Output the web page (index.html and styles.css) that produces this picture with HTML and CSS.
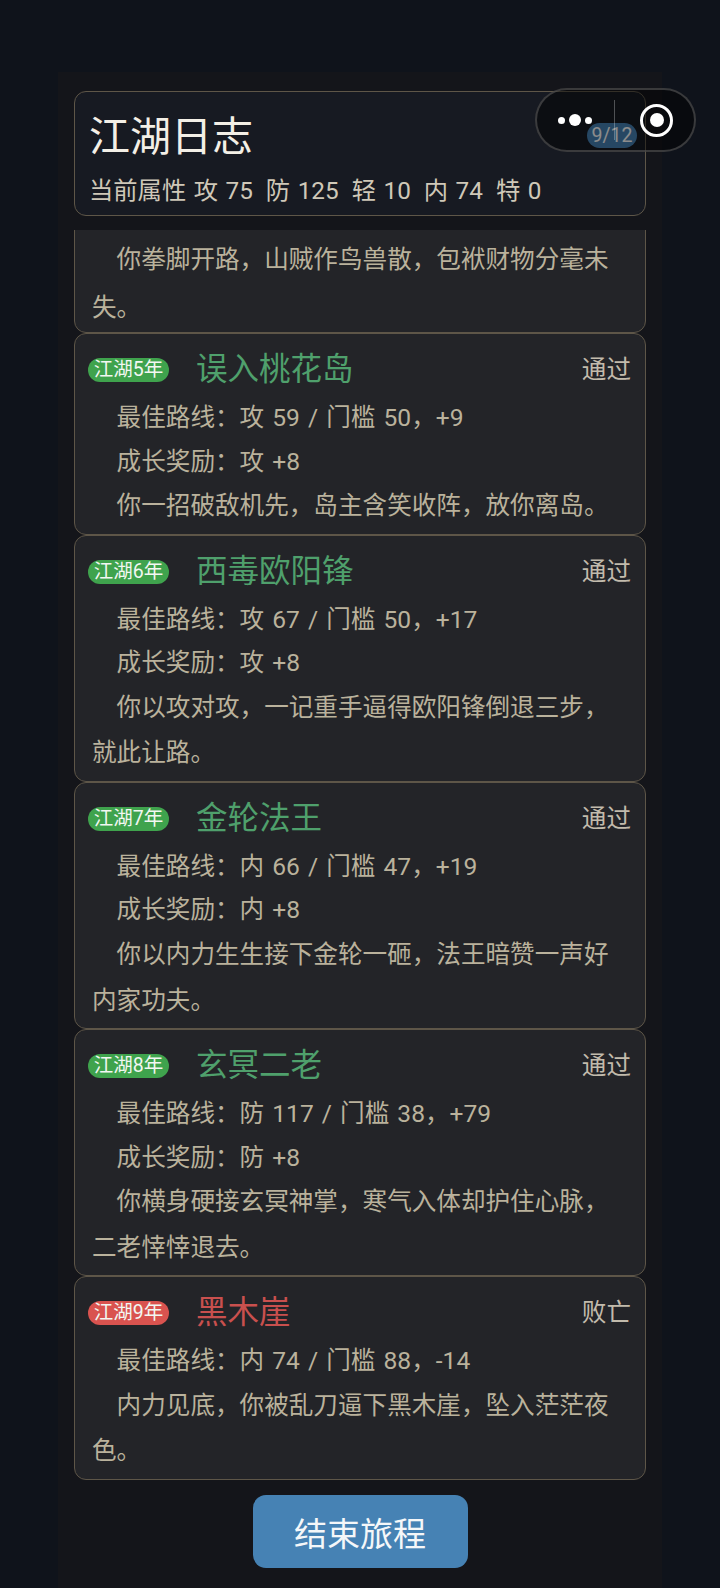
FILE: index.html
```html
<!DOCTYPE html>
<html lang="zh-CN">
<head>
<meta charset="utf-8">
<title>江湖日志</title>
<link rel="stylesheet" href="styles.css">
</head>
<body>
<main class="panel">
  <header class="head">
    <h1 class="head-title">江湖日志</h1>
    <div class="attrs"><span>当前属性 攻 75</span><span>防 125</span><span>轻 10</span><span>内 74</span><span>特 0</span></div>
    <div class="progress">9/12</div>
  </header>
  <section class="log">
    <article class="card card-cut">
      <p class="line desc desc-cut">你拳脚开路，山贼作鸟兽散，包袱财物分毫未失。</p>
    </article>
    <article class="card">
      <div class="row"><span class="tag">江湖5年</span><span class="name">误入桃花岛</span><span class="status">通过</span></div>
      <p class="line">最佳路线：攻 59 / 门槛 50，+9</p>
      <p class="line">成长奖励：攻 +8</p>
      <p class="line desc">你一招破敌机先，岛主含笑收阵，放你离岛。</p>
    </article>
    <article class="card">
      <div class="row"><span class="tag">江湖6年</span><span class="name">西毒欧阳锋</span><span class="status">通过</span></div>
      <p class="line">最佳路线：攻 67 / 门槛 50，+17</p>
      <p class="line">成长奖励：攻 +8</p>
      <p class="line desc">你以攻对攻，一记重手逼得欧阳锋倒退三步，就此让路。</p>
    </article>
    <article class="card">
      <div class="row"><span class="tag">江湖7年</span><span class="name">金轮法王</span><span class="status">通过</span></div>
      <p class="line">最佳路线：内 66 / 门槛 47，+19</p>
      <p class="line">成长奖励：内 +8</p>
      <p class="line desc">你以内力生生接下金轮一砸，法王暗赞一声好内家功夫。</p>
    </article>
    <article class="card">
      <div class="row"><span class="tag">江湖8年</span><span class="name">玄冥二老</span><span class="status">通过</span></div>
      <p class="line">最佳路线：防 117 / 门槛 38，+79</p>
      <p class="line">成长奖励：防 +8</p>
      <p class="line desc">你横身硬接玄冥神掌，寒气入体却护住心脉，二老悻悻退去。</p>
    </article>
    <article class="card">
      <div class="row"><span class="tag tag-fail">江湖9年</span><span class="name name-fail">黑木崖</span><span class="status">败亡</span></div>
      <p class="line">最佳路线：内 74 / 门槛 88，-14</p>
      <p class="line desc">内力见底，你被乱刀逼下黑木崖，坠入茫茫夜色。</p>
    </article>
  </section>
  <div class="actions"><button class="finish" type="button">结束旅程</button></div>
</main>
<div class="capsule" aria-hidden="true">
  <div class="dots"><i class="dot"></i><i class="dot dot-big"></i><i class="dot"></i></div>
  <i class="divider"></i>
  <div class="target"><i class="target-core"></i></div>
</div>
</body>
</html>
```
FILE: styles.css
```css
* { box-sizing: border-box; }
html, body { margin: 0; height: 100%; }
body {
  background: #0f131b;
  font-family: Roboto, "Noto Sans CJK SC", sans-serif;
  overflow: hidden;
  padding: 72px 58px 0;
}
.panel {
  position: relative;
  height: 1516px;
  background: #14151a;
  padding: 19px 16px 0;
  display: flex;
  flex-direction: column;
}
.head {
  position: relative;
  flex: none;
  height: 125px;
  background: #171a22;
  border: 1px solid #5e5648;
  border-radius: 12px;
  padding: 15px 14px 0;
}
.head-title {
  margin: 0;
  font-size: 41px;
  line-height: 60px;
  font-weight: 400;
  color: #f3efe6;
}
.attrs {
  margin-top: 6px;
  display: flex;
  gap: 13px;
  font-size: 24.3px;
  line-height: 36px;
  word-spacing: 1.5px;
  color: #cfc8b8;
}
.progress {
  position: absolute;
  right: 8px;
  top: 31px;
  width: 50px;
  height: 25px;
  border-radius: 13px;
  background: #4682b4;
  color: #fff;
  font-size: 19.5px;
  line-height: 25px;
  text-align: center;
}
.log {
  flex: none;
  height: 1250px;
  margin-top: 14px;
  display: flex;
  flex-direction: column;
  justify-content: flex-end;
  overflow: hidden;
}
.card {
  flex: none;
  background: #232428;
  border: 1px solid #5e5648;
  border-radius: 12px;
  padding: 13px 14px 5px 13px;
}
.card-cut { padding: 200px 14px 1px 13px; }
.row {
  display: flex;
  align-items: center;
  height: 46px;
  margin-bottom: 3px;
}
.tag {
  flex: none;
  width: 81px;
  height: 24px;
  border-radius: 12px;
  background: #3fa34d;
  color: #f2f7f2;
  font-size: 19.5px;
  line-height: 24px;
  text-align: center;
}
.tag-fail { background: #d9534f; }
.name {
  margin-left: 27px;
  font-size: 31.5px;
  line-height: 46px;
  color: #4fa06c;
}
.name-fail { color: #c9504e; }
.status {
  margin-left: auto;
  font-size: 24.6px;
  line-height: 24px;
  color: #c2bbac;
}
.line {
  margin: 0;
  padding: 0 0 0 4px;
  font-size: 24.6px;
  line-height: 43.5px;
  text-indent: 24.6px;
  word-spacing: 2px;
  color: #bab29c;
}
.desc { line-height: 45.6px; }
.desc-cut { line-height: 47.6px; }
.actions {
  flex: none;
  margin-top: 15px;
  display: flex;
  justify-content: center;
}
.finish {
  width: 215px;
  height: 73px;
  border: 0;
  border-radius: 13px;
  background: #4682b4;
  color: #f5f7f9;
  font: inherit;
  font-size: 33px;
}
.capsule {
  position: absolute;
  left: 535px;
  top: 88px;
  width: 161px;
  height: 64px;
  border-radius: 32px;
  border: 2px solid rgba(90, 90, 90, .6);
  background: rgba(0, 0, 0, .45);
  display: flex;
  align-items: center;
}
.dots {
  margin-left: 21px;
  width: 34px;
  display: flex;
  align-items: center;
  justify-content: space-between;
}
.dot { width: 7px; height: 7px; border-radius: 50%; background: #fff; }
.dot-big { width: 12px; height: 12px; }
.divider {
  margin-left: 22px;
  width: 1px;
  height: 40px;
  background: rgba(255, 255, 255, .28);
}
.target {
  margin-left: 25px;
  width: 33px;
  height: 33px;
  border: 3px solid #fff;
  border-radius: 50%;
  display: flex;
  align-items: center;
  justify-content: center;
}
.target-core { width: 14px; height: 14px; border-radius: 50%; background: #fff; }
```
